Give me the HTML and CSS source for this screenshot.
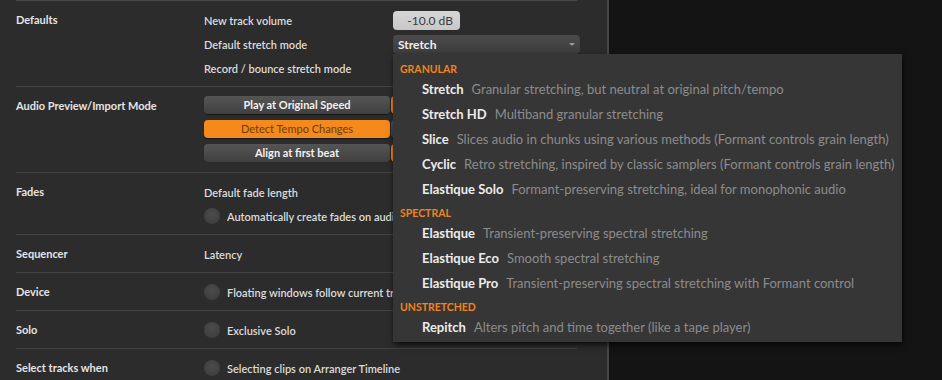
FILE: index.html
```html
<!DOCTYPE html>
<html lang="en">
<head>
  <meta charset="UTF-8" />
  <title>Preferences - Behavior</title>
  <link rel="stylesheet" href="styles.css">
</head>
<body>
  <div class="app">
    <div class="prefs">

      <div class="group">
        <div class="group-label">Defaults</div>
        <div class="group-body">
          <div class="field">
            <span>New track volume</span>
            <div class="value-box">-10.0 dB</div>
          </div>
          <div class="field">
            <span>Default stretch mode</span>
            <div class="select">
              <span>Stretch</span>
              <span class="select-arrow"></span>
            </div>
          </div>
          <div class="field">
            <span>Record / bounce stretch mode</span>
          </div>
        </div>
      </div>

      <div class="group group-buttons">
        <div class="group-label">Audio Preview/Import Mode</div>
        <div class="button-grid">
          <div class="btn">Play at Original Speed</div>
          <div class="btn active"></div>
          <div class="btn active">Detect Tempo Changes</div>
          <div class="btn"></div>
          <div class="btn">Align at first beat</div>
          <div class="btn active"></div>
        </div>
      </div>

      <div class="group">
        <div class="group-label">Fades</div>
        <div class="group-body">
          <div class="field"><span>Default fade length</span></div>
          <div class="field toggle-row under-menu"><span class="toggle"></span><span class="clip">Automatically create fades on audio clips</span></div>
        </div>
      </div>

      <div class="group">
        <div class="group-label">Sequencer</div>
        <div class="group-body">
          <div class="field"><span>Latency</span></div>
        </div>
      </div>

      <div class="group">
        <div class="group-label">Device</div>
        <div class="group-body">
          <div class="field toggle-row under-menu"><span class="toggle"></span><span class="clip">Floating windows follow current track</span></div>
        </div>
      </div>

      <div class="group">
        <div class="group-label">Solo</div>
        <div class="group-body">
          <div class="field toggle-row"><span class="toggle"></span><span>Exclusive Solo</span></div>
        </div>
      </div>

      <div class="group">
        <div class="group-label">Select tracks when</div>
        <div class="group-body">
          <div class="field toggle-row"><span class="toggle"></span><span>Selecting clips on Arranger Timeline</span></div>
        </div>
      </div>

    </div>
    <div class="void"></div>

    <div class="menu">
      <div class="menu-header">GRANULAR</div>
      <div class="menu-item"><b>Stretch</b><span>Granular stretching, but neutral at original pitch/tempo</span></div>
      <div class="menu-item"><b>Stretch HD</b><span>Multiband granular stretching</span></div>
      <div class="menu-item"><b>Slice</b><span>Slices audio in chunks using various methods (Formant controls grain length)</span></div>
      <div class="menu-item"><b>Cyclic</b><span>Retro stretching, inspired by classic samplers (Formant controls grain length)</span></div>
      <div class="menu-item"><b>Elastique Solo</b><span>Formant-preserving stretching, ideal for monophonic audio</span></div>
      <div class="menu-header">SPECTRAL</div>
      <div class="menu-item"><b>Elastique</b><span>Transient-preserving spectral stretching</span></div>
      <div class="menu-item"><b>Elastique Eco</b><span>Smooth spectral stretching</span></div>
      <div class="menu-item"><b>Elastique Pro</b><span>Transient-preserving spectral stretching with Formant control</span></div>
      <div class="menu-header">UNSTRETCHED</div>
      <div class="menu-item"><b>Repitch</b><span>Alters pitch and time together (like a tape player)</span></div>
    </div>
  </div>
</body>
</html>
```

FILE: styles.css
```css
body {
  margin: 0;
  font-family: Lato, 'Noto Sans', sans-serif;
  background: #141414;
  color: #e2e2e2;
  overflow: hidden;
}

.app {
  position: relative;
  display: flex;
  height: 380px;
}

.prefs {
  width: 561px;
  padding: 0 30px 0 16px;
  background: #2c2c2c;
  border-right: 2px solid #464646;
  overflow: hidden;
}

.void {
  flex: 1;
  background: #141414;
}

.group {
  display: grid;
  grid-template-columns: 188px 1fr;
  border-top: 1px solid #444;
  padding: 7px 0 6px;
  font-size: 11px;
}

.group:first-child {
  border-top-color: #484848;
}

.group-label {
  font-weight: 700;
  line-height: 24px;
  color: #e4e4e4;
}

.field {
  display: grid;
  grid-template-columns: 189px auto;
  align-items: center;
  height: 24px;
  font-weight: 600;
  color: #dcdcdc;
  white-space: nowrap;
}

.value-box {
  width: 60px;
  height: 19px;
  line-height: 19px;
  padding-right: 7px;
  text-align: right;
  border-radius: 4px;
  background: linear-gradient(#d6d6d6, #c8c8c8);
  color: #3a3a3a;
  font-size: 12px;
  font-weight: 400;
}

.select {
  display: flex;
  justify-content: space-between;
  align-items: center;
  width: 177px;
  height: 19px;
  padding: 0 5px;
  border-radius: 4px;
  background: linear-gradient(#4b4b4b, #3c3c3c);
  box-shadow: 0 1px 1px rgba(0,0,0,0.4);
  color: #f0f0f0;
  font-size: 12px;
  font-weight: 700;
}

.select-arrow {
  width: 0;
  height: 0;
  border-left: 3px solid transparent;
  border-right: 3px solid transparent;
  border-top: 3px solid #9a9a9a;
}

.group-buttons {
  padding: 9px 0 10px;
}

.group-buttons .group-label {
  line-height: 19px;
}

.button-grid {
  display: grid;
  grid-template-columns: 186px 186px;
  gap: 6px 1px;
  width: 189px;
  overflow: hidden;
}

.btn {
  height: 18px;
  line-height: 18px;
  text-align: center;
  border-radius: 4px;
  background: linear-gradient(#555, #404040);
  box-shadow: 0 1px 1px rgba(0,0,0,0.5);
  color: #f2f2f2;
  font-size: 11px;
  font-weight: 700;
  white-space: nowrap;
}

.btn.active {
  background: #f5891b;
  color: #6a3c12;
  font-weight: 400;
}

.toggle-row {
  display: flex;
  gap: 7px;
}

.toggle-row.under-menu {
  width: 189px;
  overflow: hidden;
}

.toggle {
  flex: none;
  width: 16px;
  height: 16px;
  border-radius: 50%;
  background: radial-gradient(circle at 50% 40%, #4c4c4c, #3a3a3a);
}

.clip {
  overflow: hidden;
}

.menu {
  position: absolute;
  left: 393px;
  top: 54px;
  width: 509px;
  padding: 8px 0 2px;
  box-sizing: border-box;
  background: #363636;
  box-shadow: 1px 3px 6px rgba(0,0,0,0.7);
  font-size: 13px;
  white-space: nowrap;
}

.menu-header {
  height: 15px;
  line-height: 15px;
  margin-top: 4px;
  padding-left: 7px;
  color: #ef8420;
  font-size: 10.5px;
  font-weight: 700;
}

.menu-header:first-child {
  margin-top: 0;
}

.menu-item {
  height: 25px;
  line-height: 25px;
  padding-left: 29px;
}

.menu-item b {
  color: #ececec;
  font-weight: 700;
  margin-right: 8px;
}

.menu-item span {
  color: #8c8c8c;
}
```
